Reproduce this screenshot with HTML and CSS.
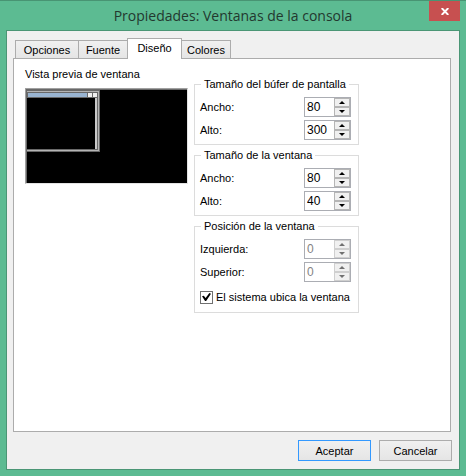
FILE: index.html
```html
<!DOCTYPE html>
<html lang="es">
<head>
<meta charset="utf-8">
<title>Propiedades: Ventanas de la consola</title>
<link rel="stylesheet" href="styles.css">
</head>
<body>
<main class="window">
  <header class="titlebar">
    <h1 class="title">Propiedades: Ventanas de la consola</h1>
    <button class="close" type="button" aria-label="Cerrar">
      <svg width="8" height="7" viewBox="0 0 8 7"><path d="M.7 0 7.3 7M7.3 0 .7 7" stroke="#fff" stroke-width="1.9"/></svg>
    </button>
  </header>
  <form class="dialog">
    <div class="tabs" role="tablist">
      <button class="tab tab-options" type="button" role="tab">Opciones</button>
      <button class="tab tab-font" type="button" role="tab">Fuente</button>
      <button class="tab tab-active" type="button" role="tab" aria-selected="true">Diseño</button>
      <button class="tab tab-colors" type="button" role="tab">Colores</button>
    </div>
    <section class="panel" role="tabpanel">
      <div class="preview">
        <p class="preview-label">Vista previa de ventana</p>
        <div class="screen">
          <div class="mini">
            <div class="mini-frame">
              <div class="mini-title"><span class="mini-bar"></span><span class="mini-box"></span><span class="mini-box"></span></div>
              <div class="mini-body"></div>
            </div>
          </div>
        </div>
      </div>
      <div class="groups">
        <fieldset class="group">
          <legend>Tamaño del búfer de pantalla</legend>
          <div class="row"><label for="bw">Ancho:</label>
            <span class="spin"><input id="bw" type="text" value="80"><span class="arrows"><button type="button" class="arrow up" aria-label="Aumentar"></button><button type="button" class="arrow down" aria-label="Reducir"></button></span></span></div>
          <div class="row"><label for="bh">Alto:</label>
            <span class="spin"><input id="bh" type="text" value="300"><span class="arrows"><button type="button" class="arrow up" aria-label="Aumentar"></button><button type="button" class="arrow down" aria-label="Reducir"></button></span></span></div>
        </fieldset>
        <fieldset class="group">
          <legend>Tamaño de la ventana</legend>
          <div class="row"><label for="ww">Ancho:</label>
            <span class="spin"><input id="ww" type="text" value="80"><span class="arrows"><button type="button" class="arrow up" aria-label="Aumentar"></button><button type="button" class="arrow down" aria-label="Reducir"></button></span></span></div>
          <div class="row"><label for="wh">Alto:</label>
            <span class="spin"><input id="wh" type="text" value="40"><span class="arrows"><button type="button" class="arrow up" aria-label="Aumentar"></button><button type="button" class="arrow down" aria-label="Reducir"></button></span></span></div>
        </fieldset>
        <fieldset class="group">
          <legend>Posición de la ventana</legend>
          <div class="row"><label for="px">Izquierda:</label>
            <span class="spin spin-off"><input id="px" type="text" value="0" disabled><span class="arrows"><button type="button" class="arrow up" aria-label="Aumentar" disabled></button><button type="button" class="arrow down" aria-label="Reducir" disabled></button></span></span></div>
          <div class="row"><label for="py">Superior:</label>
            <span class="spin spin-off"><input id="py" type="text" value="0" disabled><span class="arrows"><button type="button" class="arrow up" aria-label="Aumentar" disabled></button><button type="button" class="arrow down" aria-label="Reducir" disabled></button></span></span></div>
          <div class="check"><input id="auto" type="checkbox" checked><label for="auto">El sistema ubica la ventana</label></div>
        </fieldset>
      </div>
    </section>
    <footer class="actions">
      <button class="btn btn-default" type="submit">Aceptar</button>
      <button class="btn" type="button">Cancelar</button>
    </footer>
  </form>
</main>
</body>
</html>
```
FILE: styles.css
```css
* { box-sizing: border-box; }

body {
  margin: 0;
  background: #5cbb92;
  color: #000;
  font: 11px/16px "Liberation Sans", Arial, sans-serif;
}

button, input { font: inherit; color: inherit; }
button { padding: 0; }

.window {
  display: flex;
  flex-direction: column;
  min-height: 100vh;
  padding: 0 6px 6px;
  border-top: 1px solid #489473;
}

.titlebar {
  display: grid;
  grid-template-columns: 31px 1fr 31px;
  height: 29px;
}

.title {
  grid-column: 2;
  margin: 0;
  color: #23382f;
  font: 14px/29px "Open Sans", "Noto Sans", sans-serif;
  text-align: center;
  white-space: nowrap;
}

.close {
  display: flex;
  align-items: center;
  justify-content: center;
  height: 20px;
  border: 0;
  background: #c75050;
}

.dialog {
  display: flex;
  flex: 1;
  flex-direction: column;
  padding: 7px 7px 8px 6px;
  border: 1px solid #4a9675;
  background: #f0f0f0;
}

.tabs {
  display: flex;
  align-items: flex-end;
  height: 21px;
  padding-left: 2px;
  margin-bottom: -1px;
}

.tab {
  height: 19px;
  margin-right: -1px;
  border: 1px solid #acacac;
  background: linear-gradient(#f0f0f0, #e5e5e5);
}

.tab-options { width: 64px; }
.tab-font { width: 50px; }
.tab-colors { width: 50px; }

.tab-active {
  position: relative;
  width: 55px;
  height: 21px;
  padding-bottom: 2px;
  border-bottom: 0;
  background: #fff;
}

.panel {
  display: flex;
  flex: 1;
  align-items: flex-start;
  gap: 6px;
  margin-right: 1px;
  padding: 7px 11px;
  border: 1px solid #acacac;
  background: #fff;
}

.preview { width: 163px; }
.preview-label { margin: 0 0 6px; }

.screen {
  height: 96px;
  padding: 1px;
  border: 1px solid;
  border-color: #a0a0a0 #e3e3e3 #e3e3e3 #a0a0a0;
  background: #000;
  box-shadow: inset 1px 1px #696969;
}

.mini {
  display: flex;
  width: 73px;
  height: 62px;
  padding: 1px 1px 1px 0;
  border: 1px solid #696969;
  border-left: 0;
  background: #b4b4b4;
}

.mini-frame {
  display: flex;
  flex: 1;
  flex-direction: column;
  border: 1px solid #696969;
  border-left: 0;
}

.mini-title {
  display: flex;
  gap: 1px;
  padding: 0 0 1px 1px;
  background: #696969;
}

.mini-bar { flex: 1; height: 4px; background: #99b4d1; }
.mini-box { width: 4px; height: 4px; background: #f0f0f0; }

.mini-body {
  flex: 1;
  border-right: 2px solid #c8c8c8;
  background: #000;
}

.groups {
  display: flex;
  flex-direction: column;
  gap: 2px;
  width: 165px;
  padding-top: 10px;
}

.group {
  display: grid;
  gap: 3px;
  min-width: 0;
  margin: 0;
  padding: 5px 7px 4px 5px;
  border: 1px solid #dcdcdc;
}

.group legend { margin-left: 1px; padding: 0 3px; white-space: nowrap; }

.row {
  display: flex;
  align-items: center;
  justify-content: space-between;
}

.spin {
  display: flex;
  width: 47px;
  height: 20px;
  border: 1px solid #abadb3;
  background: #fff;
}

.spin input {
  flex: 1;
  min-width: 0;
  padding: 0 2px;
  border: 0;
  background: none;
  font-size: 12px;
}

.arrows { display: grid; grid-template-rows: 9px 9px; width: 16px; }

.arrow {
  display: flex;
  align-items: center;
  justify-content: center;
  border: 1px solid #b5b5b5;
  background: #f0f0f0;
}

.arrow::before {
  width: 6px;
  height: 3px;
  background: #000;
  content: "";
}

.up::before { clip-path: polygon(50% 0, 100% 100%, 0 100%); }
.down::before { clip-path: polygon(0 0, 100% 0, 50% 100%); }

.spin-off input { color: #838383; }
.spin-off .arrows { background: #f0f0f0; }
.spin-off .arrow { border-color: #cfcfcf; }
.spin-off .arrow::before { background: #707070; }

.check {
  display: flex;
  align-items: center;
  gap: 3px;
  padding: 4px 0 3px;
  white-space: nowrap;
}

.check input {
  display: grid;
  flex: none;
  place-items: center;
  width: 13px;
  height: 13px;
  margin: 0;
  border: 1px solid #707070;
  appearance: none;
}

.check input:checked::before {
  width: 9px;
  height: 8px;
  background: #000;
  clip-path: polygon(0 42%, 20% 35%, 40% 62%, 82% 0, 100% 10%, 46% 100%, 34% 100%);
  content: "";
}

.actions {
  display: flex;
  justify-content: flex-end;
  gap: 8px;
  padding-top: 8px;
}

.btn {
  width: 73px;
  height: 21px;
  border: 1px solid #acacac;
  background: linear-gradient(#f0f0f0, #e5e5e5);
  font-size: 11px;
}

.btn-default { border-color: #3399ff; }
```
